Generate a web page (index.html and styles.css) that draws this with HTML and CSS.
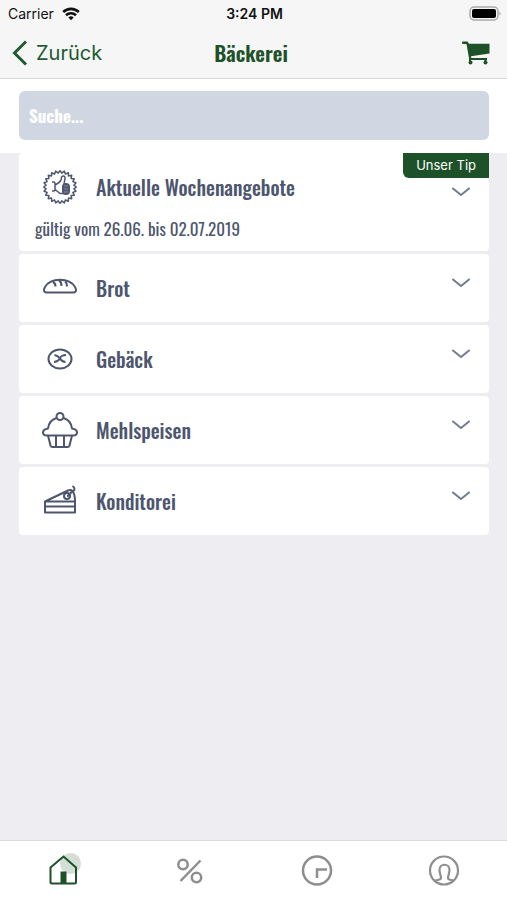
FILE: index.html
```html
<!DOCTYPE html>
<html lang="de">
<head>
    <meta charset="UTF-8">
    <meta name="viewport" content="width=device-width, initial-scale=1">
    <title>Bäckerei</title>
    <link rel="stylesheet" href="styles.css">
</head>
<body>
    <div class="statusbar">
        <div class="carrier">
            <span>Carrier</span>
            <svg width="18" height="14" viewBox="0 0 18 14" fill="none" stroke="#111" stroke-width="2.6">
                <path d="M1.2 5a11.2 11.2 0 0 1 15.600 0"/>
                <path d="M4 8.300a7.200 7.200 0 0 1 10 0"/>
                <path d="M6.300 10.500a4 4 0 0 1 5.400 0L9 13.300z" fill="#111" stroke="none"/>
            </svg>
        </div>
        <time class="clock">3:24 PM</time>
        <svg class="battery" width="32" height="16" viewBox="0 0 32 16">
            <rect x="1" y="1" width="28" height="13" rx="4" fill="none" stroke="#aaa" stroke-width="1.5"/>
            <rect x="3" y="3" width="24" height="9" rx="2"/>
            <path d="M30.500 5.500a2.500 2.500 0 0 1 0 4z" fill="#999"/>
        </svg>
    </div>
    <header class="topbar">
        <a class="back" href="#">
            <svg width="16" height="26" viewBox="0 0 16 26" fill="none" stroke="#205a30" stroke-width="3"><path d="M14 1.500L2.500 13 14 24.500"/></svg>
            Zurück
        </a>
        <h1>Bäckerei</h1>
        <a class="cart" href="#" aria-label="Warenkorb">
            <svg width="28" height="24" viewBox="0 0 28 24" fill="#1d5128">
                <path d="M0 1.500Q0 .5 1 .5h4.500L7 2.800h20.500v9.700L9 15.200l.3 1.800H25v2H7.300L4.500 3H1Q0 3 0 1.500z"/>
                <path d="M7 18h2v3H7zM22.500 18h2v3h-2z"/>
                <circle cx="8.500" cy="21.500" r="2"/>
                <circle cx="23.500" cy="21.500" r="2"/>
            </svg>
        </a>
    </header>
    <div class="search">
        <input type="search" placeholder="Suche..." aria-label="Suche">
    </div>

    <main class="container">
        <article class="card card-tip">
            <span class="tip">Unser Tip</span>
            <button class="card-head">
                <svg class="card-icon" width="36" height="36" viewBox="-18 -18 36 36">
                    <g stroke-width="1.5">
                        <path id="zacken" d="M16.500 0L13.900 1.800 15.900 4.300 12.900 5.400 14.300 8.300 11.100 8.500 11.700 11.700 8.500 11.100 8.300 14.300 5.400 12.900 4.300 15.900 1.800 13.900 0 16.500"/>
                        <use href="#zacken" transform="rotate(90)"/>
                        <use href="#zacken" transform="rotate(180)"/>
                        <use href="#zacken" transform="rotate(270)"/>
                        <path d="M-8-5h1.500q1.500 0 1.500 1.500v6q0 1.500-1.500 1.500H-8M-5-2C-1-4 2-7 1.500-10c1-2 4-1 3.500 1.500L4-3M-5 2.500L0 6.500h4"/>
                    </g>
                    <rect x="2" y="-4" width="8" height="12" rx="4" fill="#4d566e" stroke="none"/>
                    <path d="M4-1h4M4 2h4M4 5h4" stroke="#9298a8" stroke-width=".8"/>
                </svg>
                <span class="card-title">Aktuelle Wochenangebote</span>
                <svg class="chevron" width="18" height="10" viewBox="0 0 18 10"><path d="M1 1.500L9 8l8-6.500"/></svg>
            </button>
            <p class="card-text">gültig vom 26.06. bis 02.07.2019</p>
        </article>

        <article class="card">
            <button class="card-head">
                <svg class="card-icon" width="36" height="36" viewBox="0 0 36 36">
                    <path d="M4.500 22.500C1.500 22.500 1.500 19.500 3 17 6 12 12 9.800 18 9.800S30 12 33 17c1.500 2.500 1.500 5.500-1.500 5.500z"/>
                    <path d="M11 12c2 1 2.500 2.500 2.500 4.500M17 10.500c2 1 2.500 3 2.500 5.500M23 11.500c1.500 1 2 2.500 2 5"/>
                </svg>
                <span class="card-title">Brot</span>
                <svg class="chevron" width="18" height="10" viewBox="0 0 18 10"><path d="M1 1.500L9 8l8-6.500"/></svg>
            </button>
        </article>

        <article class="card">
            <button class="card-head">
                <svg class="card-icon" width="36" height="36" viewBox="0 0 36 36">
                    <ellipse cx="18" cy="18" rx="11.500" ry="9.500"/>
                    <path d="M12.500 14c3 .5 4 1.500 5.500 3.500M24 14c-3 0-6 1.500-6 3.500 1.500 2.500 3.500 3.500 5.500 3.500M18 17.500c-1.500 2-3.500 3.500-6 3.500"/>
                </svg>
                <span class="card-title">Gebäck</span>
                <svg class="chevron" width="18" height="10" viewBox="0 0 18 10"><path d="M1 1.500L9 8l8-6.500"/></svg>
            </button>
        </article>

        <article class="card">
            <button class="card-head">
                <svg class="card-icon" width="36" height="36" viewBox="0 0 36 36">
                    <circle cx="18" cy="4.500" r="3.500"/>
                    <path d="M14.500 6C9.500 7.500 6.500 11.500 6 16.500 2.500 17 1 18.500 1 20.500 1 23 3 23.500 5 23.500h26c2 0 4-.5 4-3s-1.500-3.500-5-4C29.500 11.500 26.500 7.500 21.500 6"/>
                    <path d="M6 23.500l2.500 10c.3 1 1 1.500 2 1.500h15c1 0 1.700-.5 2-1.500l2.500-10M14 24v11M22 24v11"/>
                </svg>
                <span class="card-title">Mehlspeisen</span>
                <svg class="chevron" width="18" height="10" viewBox="0 0 18 10"><path d="M1 1.500L9 8l8-6.500"/></svg>
            </button>
        </article>

        <article class="card">
            <button class="card-head">
                <svg class="card-icon" width="36" height="36" viewBox="0 0 36 36">
                    <path d="M3 18.500h30v11H3zM3 23.500h30M3 18.500L26 7.500c2-1 3.500-.5 4.500.5 1.500 2 2.500 5 2.500 10"/>
                    <circle cx="25" cy="13" r="3"/>
                    <path d="M25 13c2 0 3-1.500 4-3.500 2-1 3.500-2 3.500-3.500 0-1-.5-2-2-3"/>
                </svg>
                <span class="card-title">Konditorei</span>
                <svg class="chevron" width="18" height="10" viewBox="0 0 18 10"><path d="M1 1.500L9 8l8-6.500"/></svg>
            </button>
        </article>
    </main>

    <nav class="tabbar">
        <a class="active" href="#" aria-label="Start">
            <svg width="36" height="36" viewBox="0 0 36 36" stroke-width="2">
                <circle cx="25.500" cy="10.500" r="10.500" fill="#d3dfd5" stroke="none"/>
                <path d="M5.500 14.500L18.500 3.500l12.500 11V29q0 1.500-1.500 1.500H7q-1.500 0-1.500-1.500z"/>
                <path d="M15.500 18.500h6v12h-6z" fill="#1d5128" stroke="none"/>
            </svg>
        </a>
        <a href="#" aria-label="Angebote">
            <svg width="36" height="36" viewBox="0 0 36 36" stroke-width="2.5">
                <circle cx="11" cy="11.500" r="4.700"/>
                <circle cx="24.500" cy="24.500" r="4.700"/>
                <path d="M28.500 7.500L8.500 28"/>
            </svg>
        </a>
        <a href="#" aria-label="Verlauf">
            <svg width="36" height="36" viewBox="0 0 36 36" stroke-width="2.5">
                <circle cx="18" cy="17.500" r="14"/>
                <path d="M18 25V16.500h10"/>
            </svg>
        </a>
        <a href="#" aria-label="Profil">
            <svg width="36" height="36" viewBox="0 0 36 36" stroke-width="2.2">
                <circle cx="18" cy="17.500" r="14"/>
                <path d="M8.500 27.500c3-.5 6.500-.5 6.500-2.500 0-3-1.500-4-1.500-8 0-7 10-7 10 0 0 4-1.500 5-1.500 8 0 2 3 2 6 2.500"/>
            </svg>
        </a>
    </nav>
</body>
</html>
```

FILE: styles.css
```css
*{
    box-sizing: border-box;
}
body{
    margin: 0;
    min-height: 100vh;
    display: flex;
    flex-direction: column;
    background-color: #eeedf2;
    font-family: Inter, "Liberation Sans", sans-serif;
    color: #4d566e;
}
a{
    color: #205a30;
    text-decoration: none;
}
svg{
    display: block;
}

/* statusbar og top */
.statusbar{
    display: grid;
    grid-template-columns: 1fr auto 1fr;
    align-items: center;
    height: 27px;
    padding: 0 6px 0 8px;
    background-color: #f6f6f6;
    color: #111;
    font-size: 14px;
}
.carrier{
    display: flex;
    align-items: center;
    gap: 8px;
}
.clock{
    font-weight: 600;
}
.battery{
    justify-self: end;
}
.topbar{
    display: grid;
    grid-template-columns: 1fr auto 1fr;
    align-items: center;
    height: 52px;
    padding: 0 17px 0 12px;
    background-color: #f6f6f6;
    border-bottom: 1px solid #d8d8da;
}
.back{
    display: flex;
    align-items: center;
    gap: 8px;
    font-size: 20px;
}
.topbar h1{
    margin: 0;
    font-family: Oswald, "Liberation Sans Narrow", "Liberation Sans", sans-serif;
    font-size: 21px;
    font-weight: 600;
    color: #1d5128;
}
.cart{
    justify-self: end;
}

.search{
    padding: 12px 18px 13px 19px;
    background-color: white;
}
.search input{
    display: block;
    width: 100%;
    height: 49px;
    padding: 0 10px;
    border: 0;
    border-radius: 6px;
    background-color: #d0d7e2;
    font-family: Oswald, "Liberation Sans Narrow", "Liberation Sans", sans-serif;
    font-size: 17px;
    font-weight: bold;
}
.search input::placeholder{
    color: white;
    opacity: 1;
}

/* kategorier */
.container{
    flex: 1;
    display: flex;
    flex-direction: column;
    gap: 3px;
    padding: 0 18px 0 19px;
}
.card{
    position: relative;
    background-color: white;
    border-radius: 4px;
}
.card-head{
    display: flex;
    align-items: center;
    width: 100%;
    height: 68px;
    padding: 0 19px 0 23px;
    border: 0;
    background: none;
    color: inherit;
    font-family: Oswald, "Liberation Sans Narrow", "Liberation Sans", sans-serif;
    font-size: 20px;
    font-weight: 500;
    text-align: left;
}
.card-icon{
    margin-right: 18px;
    fill: none;
    stroke: #4d566e;
    stroke-width: 2;
    stroke-linejoin: round;
}
.card-title{
    flex: 1;
}
.chevron{
    margin-bottom: 10px;
    fill: none;
    stroke: #737b8f;
    stroke-width: 2;
    stroke-linecap: round;
}
.card-tip .chevron{
    margin: 10px 0 0;
}
.card-text{
    margin: 0;
    padding: 0 16px 14px;
    font-family: Oswald, "Liberation Sans Narrow", "Liberation Sans", sans-serif;
    font-size: 17px;
    line-height: 16px;
}
.tip{
    position: absolute;
    top: 0;
    right: 0;
    padding: 0 13px;
    border-bottom-left-radius: 6px;
    background-color: #1d5128;
    color: white;
    font-size: 13px;
    line-height: 25px;
}

.tabbar{
    display: flex;
    height: 60px;
    border-top: 1px solid #dcdce0;
    background-color: white;
}
.tabbar a{
    flex: 1;
    display: flex;
    align-items: center;
    justify-content: center;
}
.tabbar svg{
    fill: none;
    stroke: #8e8e8e;
}
.tabbar .active svg{
    stroke: #1d5128;
}
```
